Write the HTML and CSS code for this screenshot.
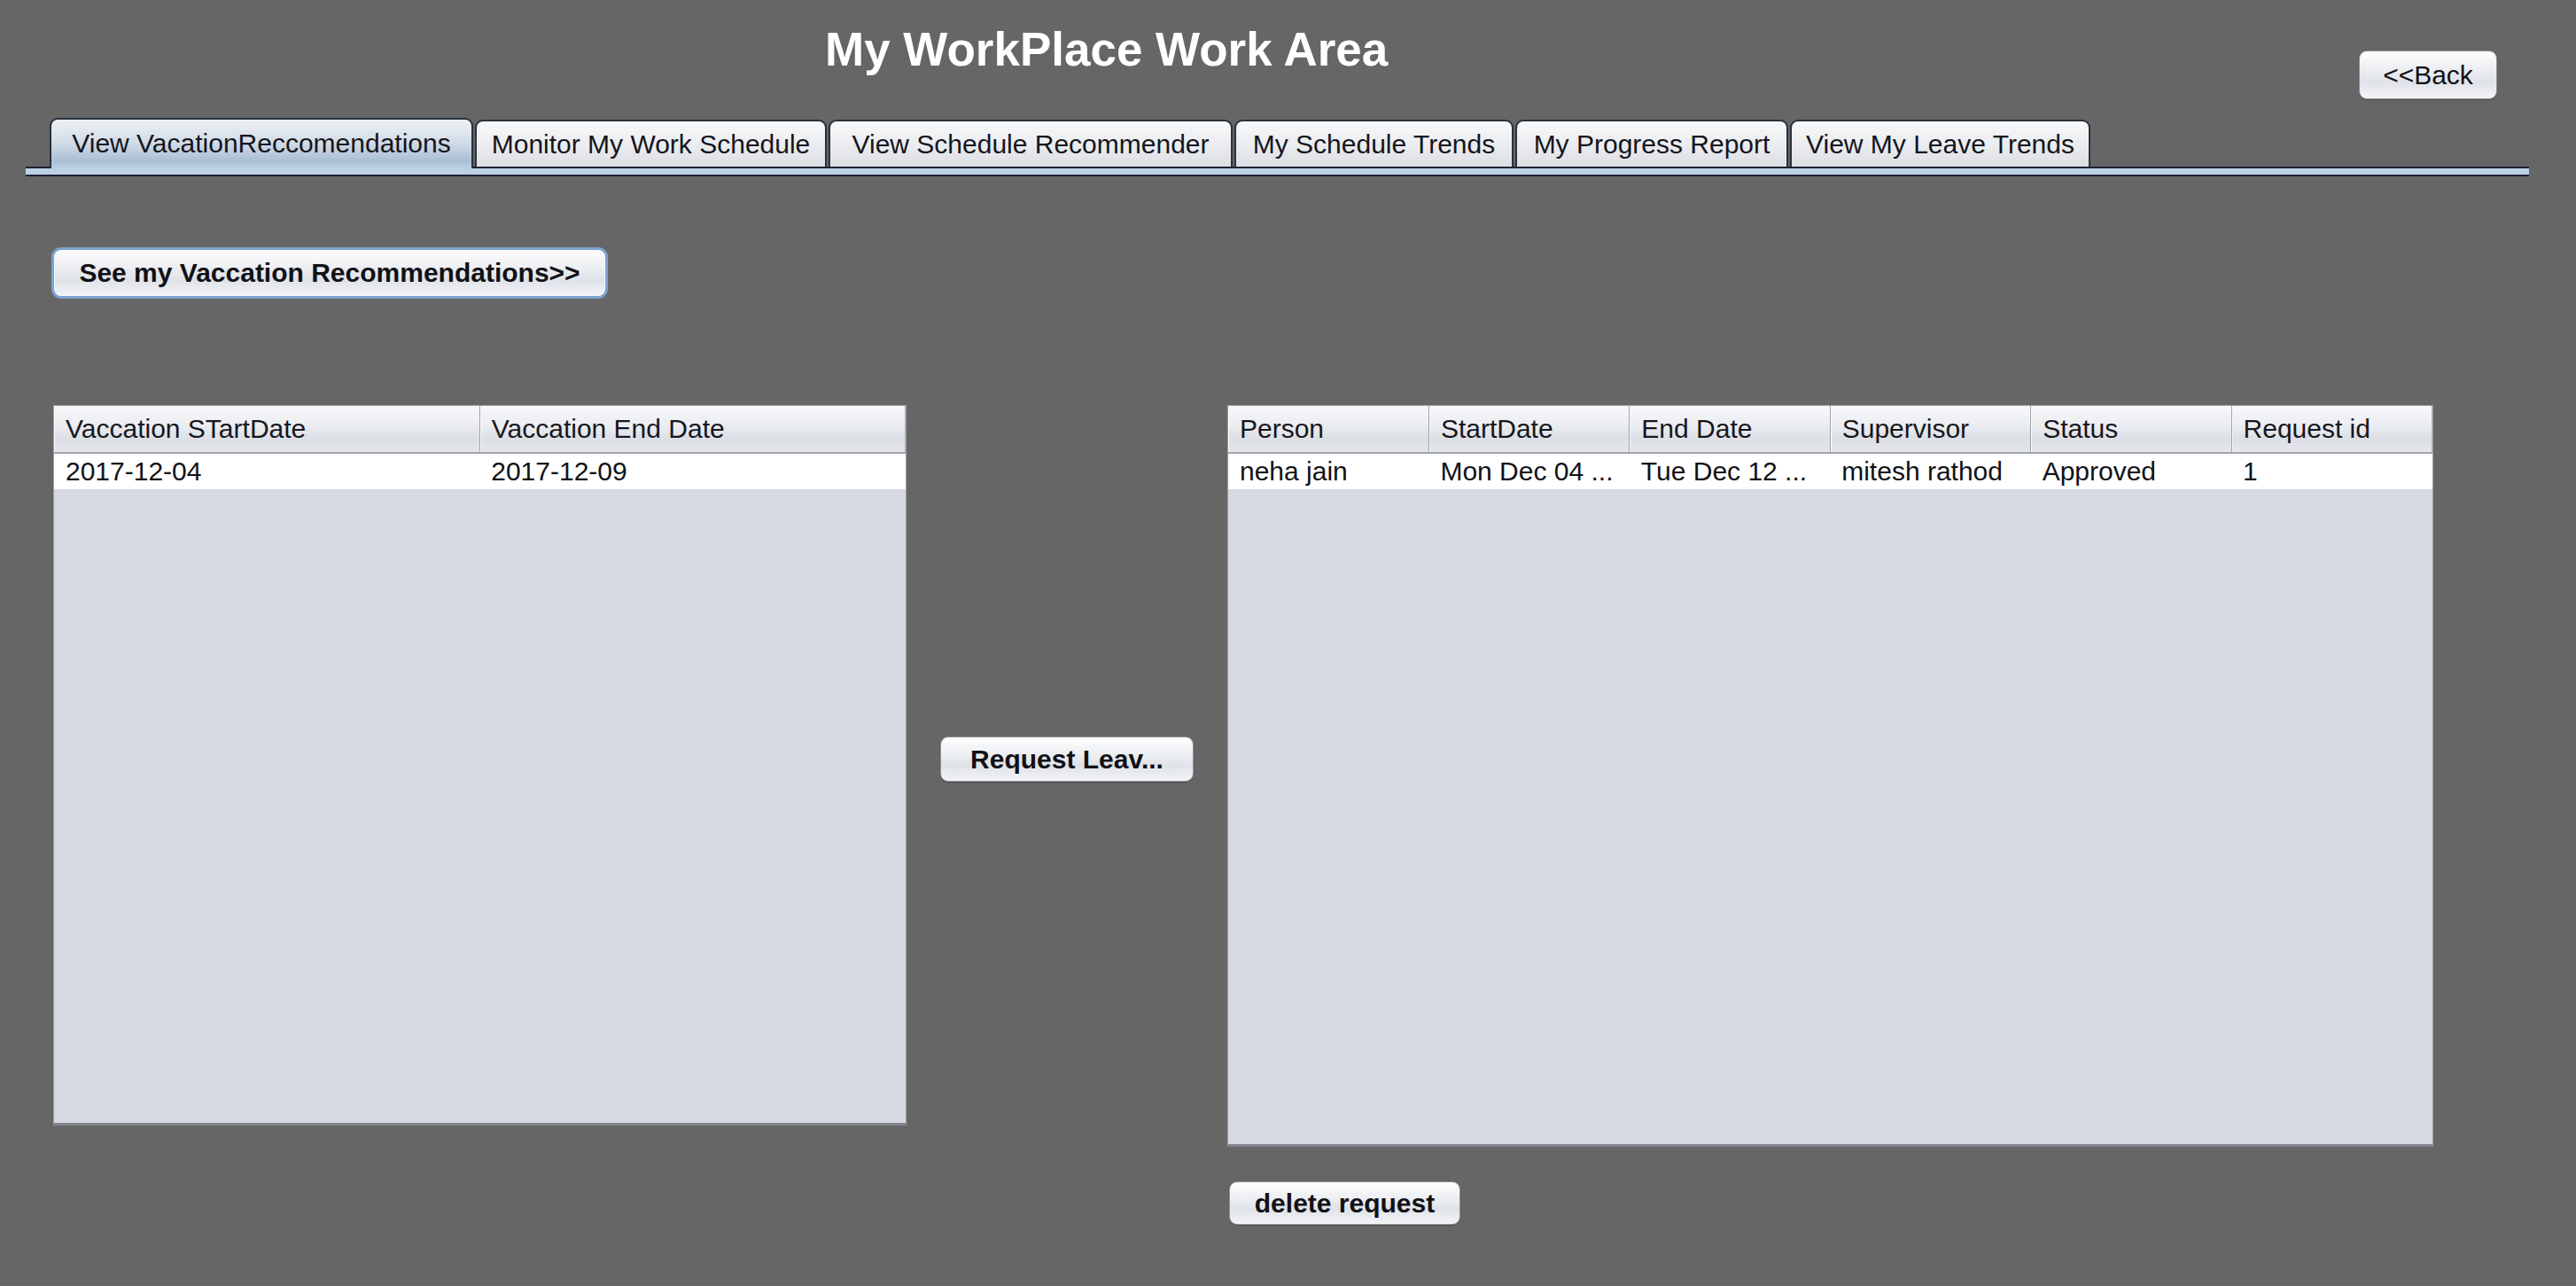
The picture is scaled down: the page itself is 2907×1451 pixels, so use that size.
FILE: index.html
```html
<!DOCTYPE html>
<html>
<head>
<meta charset="utf-8">
<title>My WorkPlace Work Area</title>
<link rel="stylesheet" href="styles.css">
</head>
<body>
<div class="page">
  <header class="header">
    <h1 class="title">My WorkPlace Work Area</h1>
    <button class="btn back-btn">&lt;&lt;Back</button>
  </header>

  <nav class="tabs">
    <div class="tab-row">
      <div class="tab active">View VacationReccomendations</div>
      <div class="tab">Monitor My Work Schedule</div>
      <div class="tab">View Schedule Recommender</div>
      <div class="tab">My Schedule Trends</div>
      <div class="tab">My Progress Report</div>
      <div class="tab">View My Leave Trends</div>
    </div>
    <div class="tab-strip"></div>
  </nav>

  <main class="content">
    <button class="btn bold-btn see-btn">See my Vaccation Recommendations&gt;&gt;</button>

    <div class="panels">
      <div class="table-box left-box">
        <table class="grid">
          <thead>
            <tr><th>Vaccation STartDate</th><th>Vaccation End Date</th></tr>
          </thead>
          <tbody>
            <tr><td>2017-12-04</td><td>2017-12-09</td></tr>
          </tbody>
        </table>
      </div>

      <div class="mid">
        <button class="btn bold-btn request-btn">Request Leav...</button>
      </div>

      <div class="right-col">
        <div class="table-box right-box">
          <table class="grid">
            <thead>
              <tr><th>Person</th><th>StartDate</th><th>End Date</th><th>Supervisor</th><th>Status</th><th>Request id</th></tr>
            </thead>
            <tbody>
              <tr><td>neha jain</td><td>Mon Dec 04 ...</td><td>Tue Dec 12 ...</td><td>mitesh rathod</td><td>Approved</td><td>1</td></tr>
            </tbody>
          </table>
        </div>
        <button class="btn bold-btn delete-btn">delete request</button>
      </div>
    </div>
  </main>
</div>
</body>
</html>
```

FILE: styles.css
```css
html, body {
  margin: 0;
  padding: 0;
}

body {
  background: #666666;
  font-family: "Liberation Sans", Arial, sans-serif;
  color: #151518;
}

.page {
  width: 2907px;
  height: 1451px;
  overflow: hidden;
}

/* ---------- header ---------- */
.header {
  display: flex;
  align-items: flex-start;
  height: 133px;
}

.title {
  margin: 25px 0 0 931px;
  font-size: 53px;
  line-height: 61px;
  font-weight: bold;
  color: #ffffff;
  white-space: nowrap;
}

/* ---------- buttons ---------- */
.btn {
  box-sizing: border-box;
  font-family: "Liberation Sans", Arial, sans-serif;
  font-size: 30px;
  color: #111116;
  border: 1px solid #8d9198;
  border-radius: 9px;
  background: linear-gradient(#fdfdfe 0%, #eef0f3 35%, #dfe2e8 65%, #f3f4f7 100%);
  box-shadow: 0 1px 1px rgba(0, 0, 0, 0.25);
  padding: 0;
  cursor: default;
  white-space: nowrap;
}

.bold-btn {
  font-weight: bold;
}

.back-btn {
  margin: 57px 89px 0 auto;
  width: 156px;
  height: 55px;
}

.see-btn {
  display: block;
  width: 628px;
  height: 58px;
  border: 3px solid #7ba3cf;
  border-radius: 11px;
  box-shadow: inset 0 0 0 1px #f7f9fc;
}

.request-btn {
  width: 286px;
  height: 51px;
}

.delete-btn {
  display: block;
  margin: 39px 0 0 2px;
  width: 261px;
  height: 49px;
}

/* ---------- tabs ---------- */
.tabs {
  margin: 0 53px 0 29px;
}

.tab-row {
  display: grid;
  grid-template-columns: 478px 397px 456px 315px 308px 339px;
  column-gap: 2px;
  padding-left: 27px;
  height: 55px;
  align-items: end;
}

.tab {
  box-sizing: border-box;
  height: 53px;
  display: flex;
  align-items: center;
  justify-content: center;
  font-size: 30px;
  color: #15151c;
  white-space: nowrap;
  border: 2px solid #2b313c;
  border-bottom: none;
  border-radius: 9px 9px 0 0;
  background: linear-gradient(#f8f9fa 0%, #eceef1 45%, #dcdee3 100%);
}

.tab.active {
  position: relative;
  z-index: 1;
  height: 57px;
  margin-bottom: -2px;
  padding-bottom: 2px;
  border-color: #27303d;
  background: linear-gradient(#eef1f5 0%, #d3dde8 45%, #aabfd4 85%, #bdd1e4 100%);
}

.tab-strip {
  height: 7px;
  background: #bdd1e4;
  border-top: 2px solid #1b2230;
  border-bottom: 2px solid #1b2230;
}

/* ---------- content ---------- */
.content {
  padding: 80px 0 0 58px;
}

.panels {
  display: flex;
  align-items: flex-start;
  margin-top: 120px;
}

.table-box {
  box-sizing: border-box;
  background: #d6d9e1;
  border: 1px solid #9a9ea6;
  border-bottom: 3px solid #7f838b;
}

.left-box {
  margin-left: 2px;
  width: 963px;
  height: 813px;
}

.mid {
  width: 362px;
  display: flex;
  justify-content: center;
  padding-top: 374px;
}

.right-col {
  width: 1361px;
}

.right-box {
  width: 1361px;
  height: 837px;
}

/* ---------- table grid ---------- */
.grid {
  width: 100%;
  table-layout: fixed;
  border-collapse: collapse;
  font-size: 30px;
}

.grid th {
  box-sizing: border-box;
  height: 53px;
  padding: 0 0 0 13px;
  text-align: left;
  font-weight: normal;
  color: #17171d;
  white-space: nowrap;
  overflow: hidden;
  background: linear-gradient(#f6f7f9 0%, #eceef2 40%, #dcdfe5 70%, #e4e6eb 100%);
  border-right: 1px solid #9ea2aa;
  border-bottom: 2px solid #a0a4ac;
  box-shadow: inset 1px 0 0 #fafbfc;
}

.grid th:last-child {
  border-right: 1px solid #aeb2b9;
}

.grid td {
  height: 40px;
  padding: 0 0 0 13px;
  background: #ffffff;
  color: #121217;
  white-space: nowrap;
  overflow: hidden;
}
```
